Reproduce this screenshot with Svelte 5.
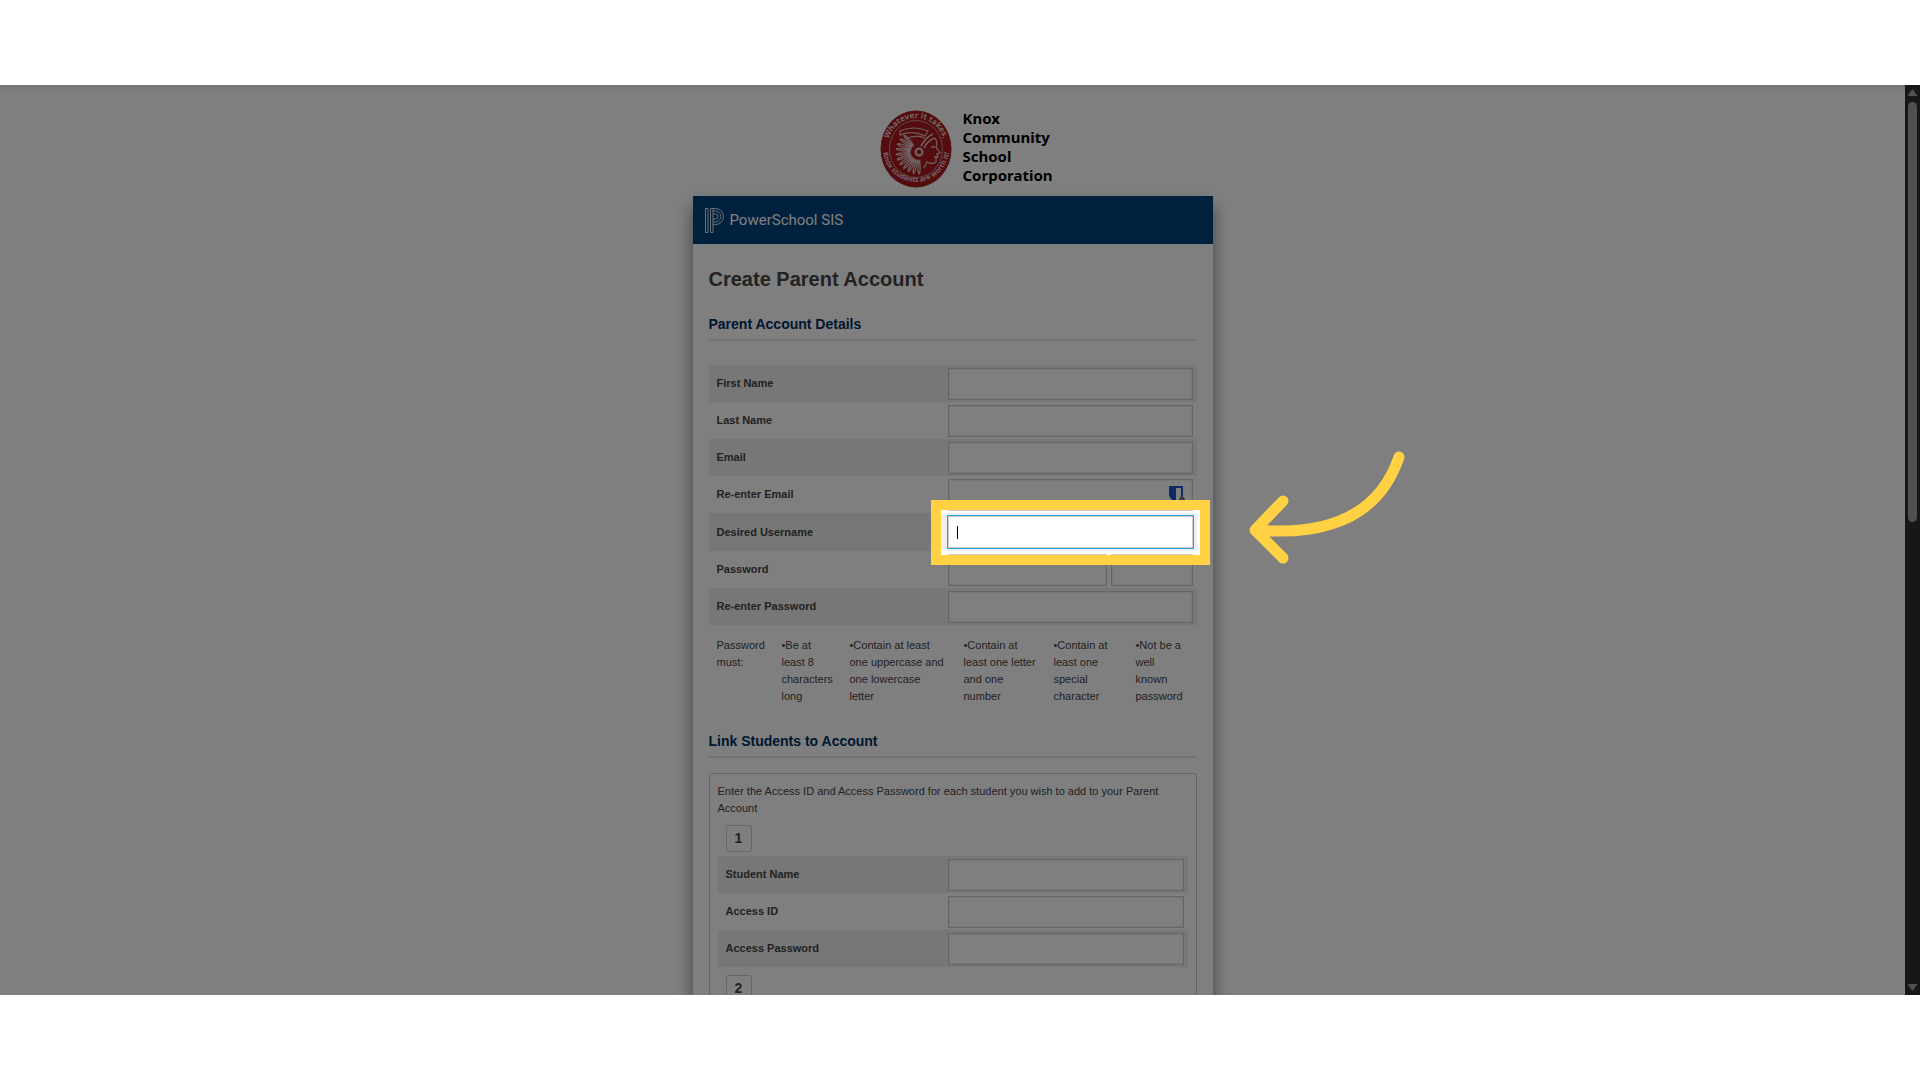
<script>
  const requirements = [
    '•Be at least 8 characters long',
    '•Contain at least one uppercase and one lowercase letter',
    '•Contain at least one letter and one number',
    '•Contain at least one special character',
    '•Not be a well known password'
  ];
  const studentFields = [
    { key: 'name', label: 'Student Name', type: 'text' },
    { key: 'id', label: 'Access ID', type: 'text' },
    { key: 'pw', label: 'Access Password', type: 'password' }
  ];
  const students = [1, 2];
  // Feathers of the headdress: narrow loops fanned out behind the head.
  const feathers = Array.from({ length: 11 }, (_, i) => {
    const deg = 86 + i * 14;
    const at = (r, d) => {
      const a = ((deg + d) * Math.PI) / 180;
      return `${(39 + Math.cos(a) * r).toFixed(1)} ${(42 + Math.sin(a) * r * 0.95).toFixed(1)}`;
    };
    return `M${at(8, 0)}Q${at(20, -1)} ${at(23, 3)}Q${at(23, 9)} ${at(9, 6)}`;
  }).join('');
</script>

<div class="frame">
  <div class="stage">
    <main class="page">
      <header class="school">
        <svg class="seal" viewBox="0 0 72 78" aria-hidden="true">
          <defs>
            <path id="arc-top" d="M7 39a29 31 0 0 1 58 0" />
            <path id="arc-bottom" d="M2.500 37a33.500 35 0 0 0 67 0" />
          </defs>
          <ellipse cx="36" cy="39" rx="35.500" ry="38.500" fill="#a8191f" />
          <ellipse cx="36" cy="39" rx="26.500" ry="28.500" fill="none" stroke="#c88f92" />
          <g fill="none" stroke="#dcc0c0">
            <path d={feathers} stroke-width="1.300" />
            <path d="M20 21q14-6 28 0l-3 5q-12-6-25-1zM26 29q10-5 19-1" stroke-width="1.200" />
            <path d="M41 36q5-9 12-12M44 38q4-8 11-10" stroke-width="1.600" />
            <path d="M55 28q3 5 1 9l4 6-3 1 1 3-2 1 0 4q-4 3-9 0l-3 6M51 37h4M54 47h3" stroke-width="1.300" />
            <circle cx="39" cy="42" r="3.400" stroke-width="2.200" />
          </g>
          <text class="seal-text"><textPath href="#arc-top" startOffset="50%">Whatever it takes,</textPath></text>
          <text class="seal-text small"><textPath href="#arc-bottom" startOffset="50%">Knox students are worth it!</textPath></text>
        </svg>
        <p class="school-name">Knox<br />Community<br />School<br />Corporation</p>
      </header>

      <div class="card">
        <div class="brand">
          <svg class="brand-mark" viewBox="0 0 19 25" aria-hidden="true">
            <path d="M.5 .5h2.500v24H.5zM5.500 .5H8v24H5.500zM8 .5h2.500a8 8 0 0 1 0 16H8M8 3h2.500a5.500 5.500 0 0 1 0 11H8M8 6h2.500a2.500 2.500 0 0 1 0 5H8" />
          </svg>
          <span>PowerSchool SIS</span>
        </div>

        <form class="body">
          <h1>Create Parent Account</h1>

          <h2>Parent Account Details</h2>
          <div class="fields">
            <div class="row"><label for="first">First Name</label><div class="cell"><input id="first" type="text" /></div></div>
            <div class="row"><label for="last">Last Name</label><div class="cell"><input id="last" type="text" /></div></div>
            <div class="row"><label for="email">Email</label><div class="cell"><input id="email" type="text" /></div></div>
            <div class="row">
              <label for="email2">Re-enter Email</label>
              <div class="cell">
                <input id="email2" type="text" />
                <svg class="shield" viewBox="0 0 16 17" aria-hidden="true">
                  <path d="M0 0h14v8q0 5-7 8-7-3-7-8z" fill="#1a56c4" />
                  <path d="M7 2h5v12H7z" fill="#fff" />
                  <path d="M10.500 13h5v4h-5zM11.500 13v-2h3v2" fill="#999" stroke="#666" />
                </svg>
              </div>
            </div>
            <div class="row tall">
              <label for="user">Desired Username</label>
              <div class="cell">
                <input id="user" class="focused" type="text" />
                <span class="caret"></span>
                <div class="spotlight"></div>
                <svg class="arrow" viewBox="0 0 156 114" aria-hidden="true">
                  <path d="M150 7Q122 90 7 80M34 51L6 80L34 108" />
                </svg>
              </div>
            </div>
            <div class="row">
              <label for="pass">Password</label>
              <div class="cell split">
                <input id="pass" type="password" />
                <input type="text" aria-label="Password strength" readonly />
              </div>
            </div>
            <div class="row"><label for="pass2">Re-enter Password</label><div class="cell"><input id="pass2" type="password" /></div></div>
          </div>

          <div class="rules">
            <p>Password must:</p>
            {#each requirements as rule}
              <p>{rule}</p>
            {/each}
          </div>

          <h2>Link Students to Account</h2>
          <div class="students">
            <p class="intro">Enter the Access ID and Access Password for each student you wish to add to your Parent Account</p>
            {#each students as n}
              <section class="student">
                <div class="badge">{n}</div>
                <div class="fields">
                  {#each studentFields as f}
                    <div class="row">
                      <label for="{f.key}{n}">{f.label}</label>
                      <div class="cell"><input id="{f.key}{n}" type={f.type} /></div>
                    </div>
                  {/each}
                </div>
              </section>
            {/each}
          </div>
        </form>
      </div>
    </main>

    <div class="scrollbar" aria-hidden="true">
      <svg viewBox="0 0 9 7"><path d="M4.500 0L9 6V7H0V6z" /></svg>
      <div class="track"><div class="thumb"></div></div>
      <svg viewBox="0 0 9 7"><path d="M4.500 7L9 1V0H0V1z" /></svg>
    </div>
  </div>
</div>

<style>
  :global(body) {
    margin: 0;
    background: #fff;
  }
  .frame {
    box-sizing: border-box;
    height: 100vh;
    padding: 85px 0;
    font-family: 'Liberation Sans', Arial, sans-serif;
    font-size: 11px;
    line-height: 17px;
    color: #444;
  }
  h1,
  h2,
  p {
    margin: 0;
  }
  .stage {
    display: flex;
    height: 100%;
    overflow: hidden;
  }
  .page {
    flex: 1;
    min-width: 0;
    display: flex;
    flex-direction: column;
    align-items: center;
    background: linear-gradient(#e6e6e6, #fff 8px);
  }
  .school {
    display: flex;
    gap: 10px;
    align-items: flex-end;
    padding: 24px 0 8px;
    flex: none;
    margin-left: 28px;
  }
  .seal {
    width: 72px;
    height: 78px;
  }
  .seal-text {
    font: bold 8px 'Open Sans', sans-serif;
    text-anchor: middle;
    fill: #e2cccc;
  }
  .seal-text.small {
    font-size: 7px;
  }
  .school-name {
    padding-bottom: 3px;
    font: bold 15px/19px 'Noto Sans', sans-serif;
    color: #000;
  }
  .card {
    flex: none;
    width: 520px;
    background: #fff;
    box-shadow: 0 10px 16px rgba(0, 0, 0, 0.5);
  }
  .brand {
    display: flex;
    align-items: center;
    gap: 6px;
    height: 48px;
    padding-left: 12px;
    background: #00427c;
    color: #fff;
    font: 15px/20px Roboto, sans-serif;
  }
  .brand-mark {
    width: 19px;
    height: 25px;
    fill: none;
    stroke: #d6e0ea;
    stroke-width: 1;
  }
  .body {
    padding: 23px 16px;
  }
  h1 {
    font-size: 20px;
    line-height: 24px;
    margin-bottom: 25px;
  }
  h2 {
    padding-bottom: 7px;
    border-bottom: 2px solid #e6e6e6;
    font-size: 14px;
    line-height: 16px;
    color: #00305f;
  }
  h2 + .fields {
    margin-top: 24px;
  }
  .row {
    display: flex;
    align-items: center;
    height: 37px;
  }
  .row.tall {
    height: 38px;
  }
  .row:nth-child(odd) {
    background: #efefef;
  }
  label {
    flex: 1;
    padding-left: 8px;
    font-weight: bold;
  }
  .cell {
    position: relative;
    display: flex;
    width: 245px;
    margin-right: 4px;
  }
  input {
    box-sizing: border-box;
    width: 100%;
    min-width: 0;
    height: 32px;
    padding: 0 8px;
    border: 1px solid #ccc;
    box-shadow: inset 0 0 0 1px #f0f0f0;
    background: #fff;
    font: inherit;
    outline: none;
  }
  .focused {
    border-color: #ccc;
    box-shadow: 0 0 0 1px #1fa3dc;
  }
  .split {
    display: grid;
    grid-template-columns: 159fr 82fr;
    gap: 4px;
  }
  .caret {
    position: absolute;
    left: 9px;
    top: 10px;
    width: 1px;
    height: 13px;
    background: #000;
  }
  .shield {
    position: absolute;
    right: 8px;
    top: 7px;
    width: 16px;
    height: 17px;
  }
  .spotlight {
    position: absolute;
    z-index: 2;
    inset: -6px -7px -7px;
    box-shadow:
      0 0 0 10px #ffd143,
      0 0 0 4000px rgba(0, 0, 0, 0.5);
    pointer-events: none;
  }
  .arrow {
    position: absolute;
    z-index: 3;
    left: 301px;
    top: -66px;
    width: 156px;
    height: 114px;
    fill: none;
    stroke: #ffd143;
    stroke-width: 11;
    stroke-linecap: round;
    stroke-linejoin: round;
  }
  .rules {
    display: grid;
    grid-template-columns: 65px 68px 114px 90px 82px 1fr;
    padding: 12px 0 28px 8px;
  }
  .rules p {
    padding-right: 14px;
  }
  .rules p:nth-child(3) {
    padding-right: 18px;
  }
  .rules p:last-child {
    padding-right: 10px;
  }
  .students {
    margin-top: 15px;
    padding: 9px 8px 8px;
    border: 1px solid #ccc;
    border-radius: 3px;
  }
  .student {
    padding-top: 8px;
  }
  .badge {
    box-sizing: border-box;
    width: 26px;
    height: 27px;
    margin: 0 8px 4px;
    border: 1px solid #ccc;
    border-radius: 3px;
    font-size: 14px;
    font-weight: bold;
    line-height: 25px;
    text-align: center;
  }
  .students .cell {
    width: 236px;
  }
  .scrollbar {
    position: relative;
    z-index: 4;
    flex: none;
    box-sizing: border-box;
    width: 15px;
    padding: 4px 3px;
    display: flex;
    flex-direction: column;
    gap: 6px;
    background: #171717;
  }
  .scrollbar svg {
    flex: none;
    width: 9px;
    height: 7px;
    fill: #505050;
  }
  .track {
    flex: 1;
  }
  .thumb {
    height: 48%;
    border-radius: 5px;
    background: #505050;
  }
</style>
